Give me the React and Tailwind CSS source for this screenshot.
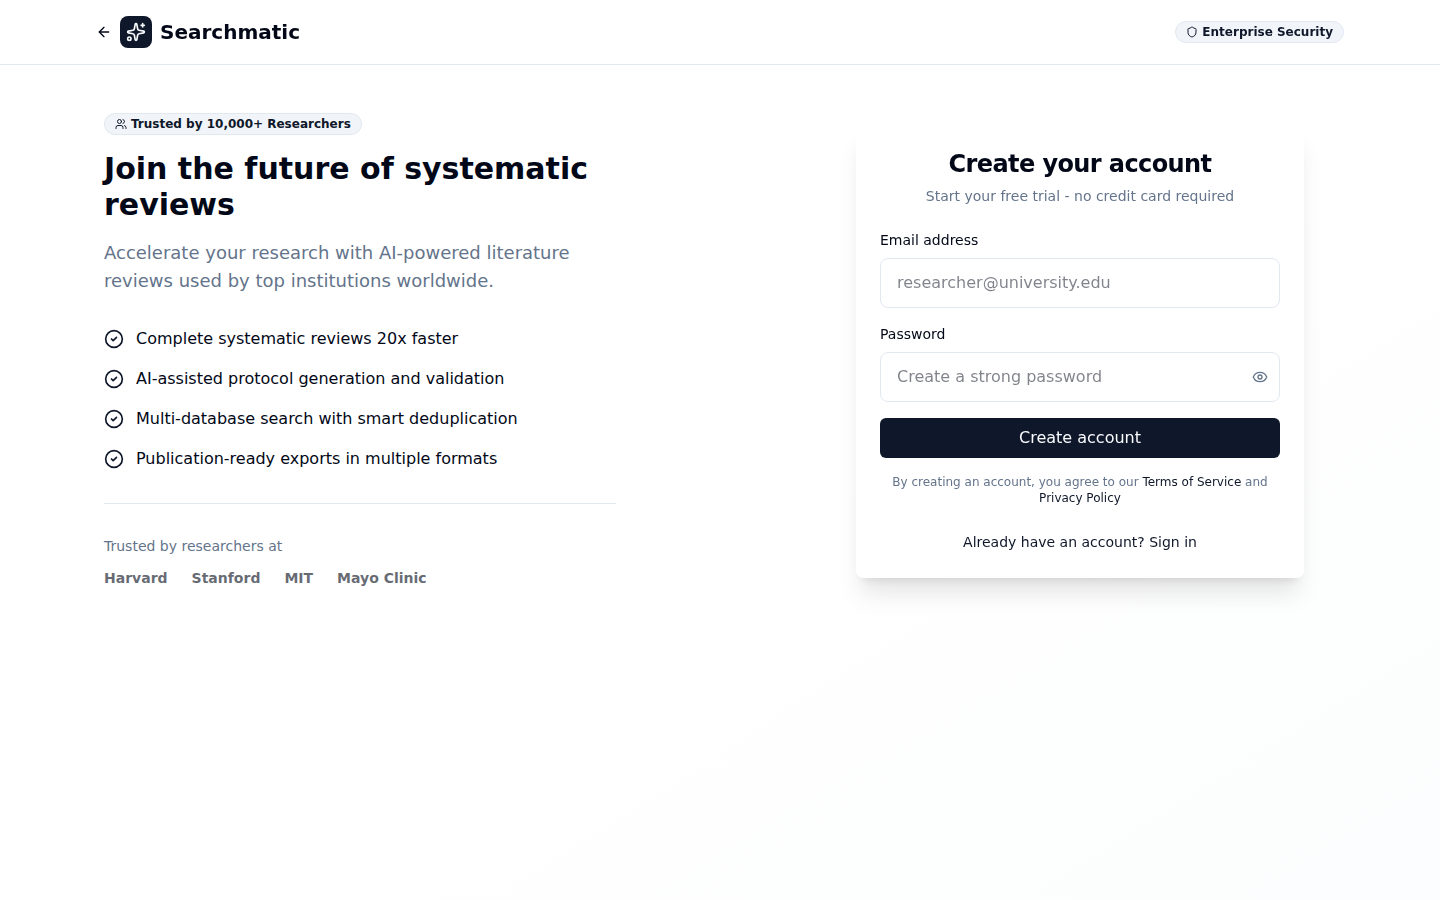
import React from "react";
import { ArrowLeft, CircleCheck, Eye, Shield, Sparkles, Users } from "lucide-react";

const features = [
  "Complete systematic reviews 20x faster",
  "AI-assisted protocol generation and validation",
  "Multi-database search with smart deduplication",
  "Publication-ready exports in multiple formats",
];

const institutions = ["Harvard", "Stanford", "MIT", "Mayo Clinic"];

function Badge({ icon: Icon, children }) {
  return (
    <span className="inline-flex items-center rounded-full border border-[#e2e8f0] bg-[#f1f5f9] px-2.5 py-0.5 text-xs font-semibold text-[#0f172a]">
      <Icon className="mr-1 size-3" />
      {children}
    </span>
  );
}

function Header() {
  return (
    <header className="border-b border-[#e2e8f0] bg-white/95 backdrop-blur">
      <div className="mx-auto flex h-16 max-w-[1280px] items-center justify-between px-4">
        <a href="#home" className="flex items-center gap-2">
          <ArrowLeft className="size-4" />
          <span className="flex size-8 items-center justify-center rounded-lg bg-[#0f172a] text-[#f8fafc]">
            <Sparkles className="size-5" />
          </span>
          <span className="text-xl font-semibold">Searchmatic</span>
        </a>
        <Badge icon={Shield}>Enterprise Security</Badge>
      </div>
    </header>
  );
}

function Pitch() {
  return (
    <section className="mx-auto w-full max-w-lg">
      <div className="flex">
        <Badge icon={Users}>Trusted by 10,000+ Researchers</Badge>
      </div>
      <h1 className="mt-4 text-3xl font-bold">Join the future of systematic reviews</h1>
      <p className="mt-4 text-lg leading-7 text-[#64748b]">
        Accelerate your research with AI-powered literature reviews used by top institutions worldwide.
      </p>
      <ul className="mt-8 space-y-4">
        {features.map((feature) => (
          <li key={feature} className="flex items-center gap-3">
            <CircleCheck className="size-5 shrink-0 text-[#0f172a]" />
            <span>{feature}</span>
          </li>
        ))}
      </ul>
      <div className="mt-8 border-t border-[#e2e8f0] pt-8">
        <p className="text-sm text-[#64748b]">Trusted by researchers at</p>
        <div className="mt-3 flex gap-6 text-sm font-semibold opacity-60">
          {institutions.map((name) => (
            <span key={name}>{name}</span>
          ))}
        </div>
      </div>
    </section>
  );
}

const inputClass =
  "block h-[50px] w-full rounded-lg border border-[#e2e8f0] bg-white px-4 py-3 text-base placeholder:text-[#020817]/50 outline-none";

function SignUpCard() {
  return (
    <section className="mx-auto w-full max-w-md rounded-lg bg-white/95 p-6 shadow-xl backdrop-blur">
      <div className="space-y-1.5 text-center">
        <h2 className="text-2xl font-semibold tracking-tight">Create your account</h2>
        <p className="text-sm text-[#64748b]">Start your free trial - no credit card required</p>
      </div>
      <form className="mt-6 space-y-4" onSubmit={(e) => e.preventDefault()}>
        <div className="space-y-2">
          <label htmlFor="email" className="block text-sm font-medium">Email address</label>
          <input id="email" type="email" placeholder="researcher@university.edu" className={inputClass} />
        </div>
        <div className="space-y-2">
          <label htmlFor="password" className="block text-sm font-medium">Password</label>
          <div className="relative">
            <input id="password" type="password" placeholder="Create a strong password" className={inputClass} />
            <button type="button" aria-label="Show password" className="absolute inset-y-0 right-3 flex items-center text-[#64748b]">
              <Eye className="size-4" />
            </button>
          </div>
        </div>
        <button type="submit" className="flex h-10 w-full items-center justify-center rounded-md bg-[#0f172a] text-base font-medium text-[#f8fafc]">
          Create account
        </button>
        <p className="text-center text-xs text-[#64748b]">
          By creating an account, you agree to our{" "}
          <a href="#terms" className="text-[#0f172a]">Terms of Service</a> and{" "}
          <a href="#privacy" className="text-[#0f172a]">Privacy Policy</a>
        </p>
      </form>
      <div className="mt-6 text-center">
        <button type="button" className="text-sm text-[#0f172a]">Already have an account? Sign in</button>
      </div>
    </section>
  );
}

export default function App() {
  return (
    <div className="min-h-screen bg-linear-to-br/srgb from-white via-white to-[#f1f5f9]/20 font-['DejaVu_Sans',sans-serif] text-[#020817]">
      <Header />
      <main className="grid grid-cols-2 items-center py-12">
        <Pitch />
        <SignUpCard />
      </main>
    </div>
  );
}
